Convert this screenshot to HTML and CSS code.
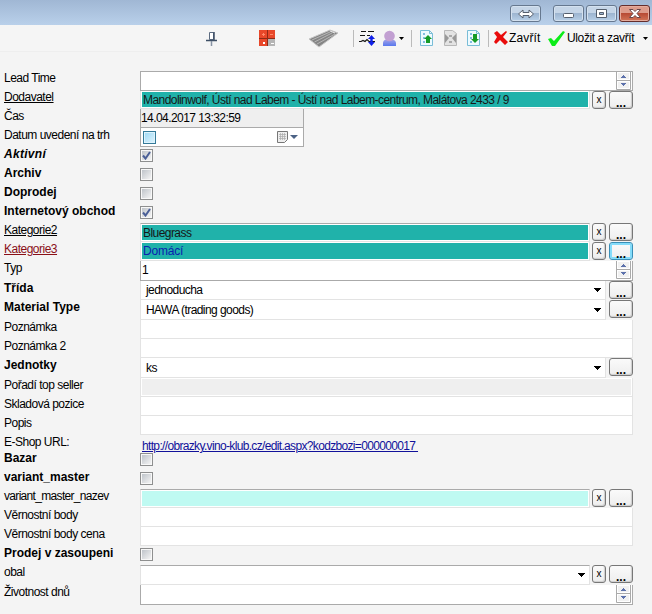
FILE: index.html
```html
<!DOCTYPE html>
<html lang="cs">
<head>
<meta charset="utf-8">
<title>Produkt</title>
<link rel="stylesheet" href="styles.css">
</head>
<body>
<svg class="defs" width="0" height="0" aria-hidden="true">
  <symbol id="check" viewBox="0 0 9 9"><path d="M1 4.5 3.5 7.5 8 1" fill="none" stroke="#4a5f97" stroke-width="2"/></symbol>
  <symbol id="spin" viewBox="0 0 15 18">
    <path d="M.5 0v17.500h14V0M0 8.500h15" fill="none" stroke="#aaa"/>
    <path d="M2 1h11v6H2zM2 10h11v6H2z" fill="#f1f1f1"/>
    <path d="M7 3h1v1h1v1h1v1H5V5h1V4h1zM5 11h5v1H9v1H8v1H7v-1H6v-1H5z" fill="#5d72ac"/>
  </symbol>
  <symbol id="arrow" viewBox="0 0 7 4"><path d="M0 0h7v1H6v1H5v1H4v1H3V3H2V2H1V1H0z"/></symbol>
  <symbol id="page" viewBox="0 0 13 16"><path d="M.5.5h9l3 3v12H.5zM9.500.5v3h3" fill="#eefaff" stroke="#79bdd7"/><path d="M3 3h2v2H3zM3 7h2v2H3zM3 11h2v2H3z" fill="#83bde0"/></symbol>
</svg>
<header class="titlebar">
  <button class="win swap"><svg width="18" height="10"><path d="M1.500 5 6 1v2.500h6V1l4.500 4L12 9V6.500H6V9z" fill="#fff" stroke="#555f6d"/></svg></button>
  <button class="win"><svg class="min" width="11" height="5"><rect x=".5" y=".5" width="10" height="4" rx="1" fill="#fff" stroke="#555f6d"/></svg></button>
  <button class="win"><svg width="11" height="9"><path d="M.5.5h10v8H.5zM3.500 3.500h4v2h-4z" fill="#fff" fill-rule="evenodd" stroke="#555f6d"/></svg></button>
  <button class="win close"><svg width="12" height="9"><path d="M.5.5H4l2 2 2-2h3.500L8 4.500l3.500 4H8l-2-2-2 2H.5l3.500-4z" fill="#fff" stroke="#68474a"/></svg></button>
</header>
<nav class="toolbar">
  <svg class="pin" width="12" height="15"><path d="M3.500 1.500h4v7h-4z" fill="#fff" stroke="#5c6b80"/><path d="M8 1v8M0 9.500h11" stroke="#3e4f66" stroke-width="1.500"/><path d="M5.500 10v5" stroke="#8793a4" stroke-width="1.500"/></svg>
  <svg class="calc" width="16" height="16"><path d="M0 0h16v16H0z" fill="#e8482a"/><path d="M9 9h7v7H9z" fill="#b5b5b5"/><path d="M8.500 0v16M0 8.500h16" stroke="#8e2a16"/><path d="M3 4.500h3M4.500 3v3M11 4.500h3" stroke="#ff8a6a"/><path d="M4 12h2v2H4zM12 13h3v1h-3z" fill="#fff"/></svg>
  <svg class="keys" width="31" height="19"><path d="M1 10 22 1l8 3-19 14z" fill="#858585"/><path d="M1 10 22 1l8 3-19 14z" fill="none" stroke="#c5c5c5"/><path d="m4 11 18-8M6.500 13 24 4M9 15 27 5" stroke="#ccc" stroke-width=".7"/><path d="m22 2 5 2" stroke="#eee"/></svg>
  <i class="sep"></i>
  <svg class="sort" width="17" height="16"><path d="M2 1.500h5M9 1.500h6M1 5.500h5M8 5.500h3M0 11.500h2l2-1 2 1 2-2 2 2h6" fill="none" stroke="#151515" stroke-width="1.200"/><path d="m12.500 5 3.500 4h-2.300v3H16l-3.500 4L9 12h2.300V9H9z" fill="#1020e8"/></svg>
  <svg class="user" width="15" height="17"><defs><linearGradient id="u" x2="0" y2="1"><stop stop-color="#a9a5e6"/><stop offset="1" stop-color="#5878ee"/></linearGradient></defs><path d="M1 16v-3q0-3 4-4h4q5 1 5 4v3z" fill="url(#u)"/><circle cx="7.500" cy="6" r="5.300" fill="#c2a0d2"/></svg>
  <svg class="tiny" width="5" height="3"><path d="M0 0h5L2.500 3z"/></svg>
  <i class="sep two"></i>
  <svg class="pg" width="13" height="16"><use href="#page"/><path d="m8 5 4 4h-2v4H6V9H4z" fill="#159b27"/></svg>
  <svg class="pg" width="13" height="16"><path d="M.5.5h8l4 3v12H.5z" fill="#e3e3e3" stroke="#b8b8b8"/><path d="m1 4 4 4-4 5zM12 4 8 8l4 5z" fill="#999"/><path d="M5 5h3v2H5zM5 11h3v2H5z" fill="#aaa"/></svg>
  <svg class="pg third" width="13" height="16"><use href="#page"/><path d="M6 4h4v5h2l-4 4-4-4h2z" fill="#159b27"/></svg>
  <i class="sep three"></i>
  <svg class="cross" width="15" height="14"><path d="M1 2 4 0l4 4 5-4 1 1-4 5 5 5-3 3-5-5-4 4-2-2 3-5z" fill="#e90c0c"/></svg>
  <span class="t-close">Zavřít</span>
  <svg class="tick" width="17" height="15"><path d="m0 8 3-1 3 3 9-10 2 1L7 15H4z" fill="#0ced19"/></svg>
  <span class="t-save">Uložit a zavřít</span>
  <svg class="tiny last" width="5" height="3"><path d="M0 0h5L2.500 3z"/></svg>
</nav>
<main class="form">
  <div class="row h20"><label>Lead Time</label><div class="box dark top"><svg class="spin"><use href="#spin"/></svg></div></div>
  <div class="row h18"><label class="link raised">Dodavatel</label><div class="box fill teal"><span class="addr">Mandolinwolf, Ústí nad Labem - Ústí nad Labem-centrum, Malátova 2433 / 9</span></div><button class="x">x</button><button class="more">...</button></div>
  <div class="row"><label>Čas</label><div class="box date gray"><span class="stamp">14.04.2017 13:32:59</span></div></div>
  <div class="row"><label>Datum uvedení na trh</label><div class="box date picker"><i class="cb blue"></i><svg class="cal" width="21" height="12"><path d="M.5.5h10v8l-3 3h-7z" fill="#eee" stroke="#777"/><path d="M2 3.500h7M2 5.500h7M2 7.500h7M3.500 2v7M5.500 2v7M7.500 2v7" stroke="#aaa" stroke-width=".7"/><path d="M13 4h8l-4 4z" fill="#4c6285"/></svg></div></div>
  <div class="row"><label class="b it">Aktivní</label><i class="cb"><svg><use href="#check"/></svg></i></div>
  <div class="row"><label class="b">Archiv</label><i class="cb"></i></div>
  <div class="row"><label class="b">Doprodej</label><i class="cb"></i></div>
  <div class="row"><label class="b">Internetový obchod</label><i class="cb"><svg><use href="#check"/></svg></i></div>
  <div class="row"><label class="link">Kategorie2</label><div class="box fill teal up"><span>Bluegrass</span></div><button class="x">x</button><button class="more">...</button></div>
  <div class="row"><label class="link red">Kategorie3</label><div class="box fill teal"><span class="dom">Domácí</span></div><button class="x">x</button><button class="more focus">...</button></div>
  <div class="row h20"><label>Typ</label><div class="box dark"><span class="one">1</span><svg class="spin"><use href="#spin"/></svg></div></div>
  <div class="row"><label class="b">Třída</label><div class="box sel"><span>jednoducha</span><svg class="arrow"><use href="#arrow"/></svg></div><button class="more">...</button></div>
  <div class="row h20"><label class="b">Material Type</label><div class="box sel"><span>HAWA (trading goods)</span><svg class="arrow"><use href="#arrow"/></svg></div><button class="more">...</button></div>
  <div class="row"><label>Poznámka</label><div class="box"></div></div>
  <div class="row"><label>Poznámka 2</label><div class="box"></div></div>
  <div class="row h20"><label class="b">Jednotky</label><div class="box sel"><span>ks</span><svg class="arrow"><use href="#arrow"/></svg></div><button class="more">...</button></div>
  <div class="row"><label>Pořadí top seller</label><div class="box fill silver"><span></span></div></div>
  <div class="row"><label>Skladová pozice</label><div class="box"></div></div>
  <div class="row"><label>Popis</label><div class="box"></div></div>
  <div class="row h16"><label class="eshop">E-Shop URL:</label><a class="url">http://obrazky.vino-klub.cz/edit.aspx?kodzbozi=000000017&nbsp;</a></div>
  <div class="row"><label class="b">Bazar</label><i class="cb"></i></div>
  <div class="row"><label class="b">variant_master</label><i class="cb"></i></div>
  <div class="row"><label class="nazev">variant_master_nazev</label><div class="box fill mint up"><span></span></div><button class="x">x</button><button class="more">...</button></div>
  <div class="row"><label>Věrnostní body</label><div class="box"></div></div>
  <div class="row"><label>Věrnostní body cena</label><div class="box"></div></div>
  <div class="row"><label class="b">Prodej v zasoupeni</label><i class="cb"></i></div>
  <div class="row h20"><label>obal</label><div class="box sel up"><span></span><svg class="arrow"><use href="#arrow"/></svg></div><button class="x">x</button><button class="more">...</button></div>
  <div class="row h20"><label>Životnost dnů</label><div class="box dark"><svg class="spin"><use href="#spin"/></svg></div></div>
</main>
</body>
</html>
```
FILE: styles.css
```css
* { box-sizing: border-box; }
body { margin: 0; height: 614px; overflow: hidden; background: #f4f4f4; color: #000; font: 12px/14px "Liberation Sans", Arial, sans-serif; letter-spacing: -0.56px; }
svg { display: block; flex: none; }
.defs { position: absolute; }
button { font: inherit; color: inherit; padding: 0; flex: none; }

.titlebar { height: 25px; display: flex; justify-content: flex-end; align-items: flex-start; gap: 2px; padding: 5px 2px 0 0; background: linear-gradient(#a0b7d4, #b9d0ea); }
.win { width: 31px; height: 17px; display: flex; align-items: center; justify-content: center; border: 1px solid #66788f; border-radius: 3px; background: linear-gradient(#c5d5e7 45%, #9db5d0 50%, #b8d0e8); box-shadow: inset 0 0 0 1px #d4e1ef; }
.win.swap { margin-right: 10px; }
.min { margin-top: 4px; }
.win.close { border-color: #642d2c; background: linear-gradient(#dd9b8b 45%, #b84b35 50%, #d27558); box-shadow: inset 0 0 0 1px #e5ac9d; }

.toolbar { height: 27px; display: flex; align-items: center; padding-left: 206px; border-bottom: 1px solid #eee; background: #f5f5f5; }
.calc { margin-left: 41px; }
.keys { margin-left: 33px; }
.sep { flex: none; width: 1px; height: 17px; margin-left: 14px; background: #bbb; }
.sort { margin-left: 5px; }
.user { margin-left: 6px; }
.tiny { margin-left: 2px; }
.sep.two { margin-left: 7px; }
.pg { margin-left: 8px; }
.pg + .pg { margin-left: 11px; }
.pg + .third { margin-left: 10px; }
.sep.three { margin-left: 8px; }
.cross { margin-left: 4px; }
.t-close, .t-save { white-space: nowrap; flex: none; }
.t-close { width: 36px; margin-left: 1px; letter-spacing: 0.15px; }
.t-save { width: 68px; margin-left: 2px; letter-spacing: -0.36px; }
.tick { margin-left: 3px; }
.tiny.last { margin-left: 8px; }

.form { padding-top: 19px; width: 633px; }
.row { height: 19px; display: flex; }
.h20 { height: 20px; }
.h18 { height: 18px; }
.h16 { height: 16px; }
label { flex: none; width: 140px; padding-left: 4px; white-space: nowrap; letter-spacing: -0.5px; }
.b { font-weight: bold; letter-spacing: 0; }
.it { font-style: italic; letter-spacing: .3px; }
.link { text-decoration: underline; }
.raised { margin-top: -1px; }
.red { color: #8a1018; }
.nazev { letter-spacing: -0.68px; }

.box { flex: 1; min-width: 0; display: flex; background: #fff; border: 1px solid #e3e3e3; border-top-width: 0; white-space: nowrap; }
.box.dark { border-color: #aaa; justify-content: flex-end; }
.box.top { border-top-width: 1px; }
.box.up { border-top: 1px solid #aaa; }
.box.fill { padding: 1px; background: #fff; }
.box.fill > span { flex: 1; padding: 1px 0 0 1px; }
.teal > span { background: #20b2aa; color: #171717; }
.teal > .dom { color: #0b20b0; letter-spacing: -0.2px; }
.mint > span { background: #bffaf2; }
.silver > span { background: #efefef; }
.box.date { flex: none; width: 164px; border-color: #aaa; }
.gray { background: #efefef; }
.stamp { padding-top: 2px; }
.picker { align-items: center; padding: 0 5px 0 2px; justify-content: space-between; }
.one { margin-right: auto; padding: 2px 0 0 1px; }
.spin { width: 15px; height: 18px; margin-right: 1px; }
.sel { justify-content: space-between; align-items: center; padding: 0 4px 0 5px; }
.arrow { width: 7px; height: 4px; }

.x, .more { display: flex; justify-content: center; align-items: center; height: 18px; border: 1px solid #777; border-radius: 3px; background: linear-gradient(#fafafa, #eee); box-shadow: inset -1px -1px 1px #ccc; }
.x { width: 14px; margin-left: 2px; font-size: 10px; line-height: 12px; }
.more { width: 24px; margin-left: 3px; padding-top: 5px; font-weight: bold; letter-spacing: 0; }
.focus { border-color: #3a8fb7; box-shadow: inset 0 0 0 2px #84dcfa; }

.cb { flex: none; width: 13px; height: 13px; margin-top: 2px; padding: 1px; border: 1px solid #8e8f8f; background: linear-gradient(135deg, #bfc4ca, #f4f4f4) content-box, #f8f8f8; }
.cb svg { width: 9px; height: 9px; }
.cb.blue { margin: 0; border-color: #347a99; background: linear-gradient(135deg, #9bd8f4, #e1f5fe); box-shadow: inset 0 0 0 1px #dff4fd; }
.url { margin: 4px 0 0 2px; color: #11119a; text-decoration: underline; white-space: nowrap; letter-spacing: -0.66px; }
```
